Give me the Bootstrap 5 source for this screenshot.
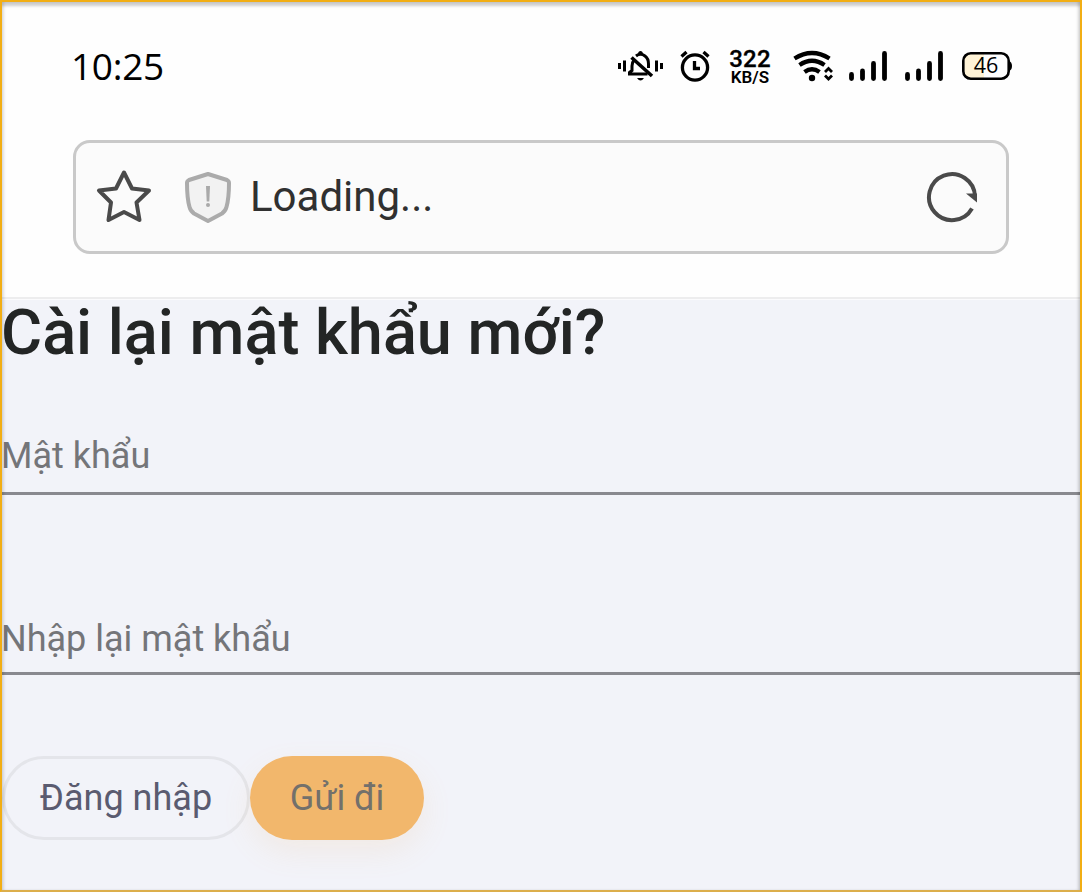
<!DOCTYPE html>
<html lang="vi">
<head>
<meta charset="utf-8">
<meta name="viewport" content="width=device-width, initial-scale=1">
<title>Cài lại mật khẩu mới?</title>
<link href="https://cdn.jsdelivr.net/npm/bootstrap@5.3.0/dist/css/bootstrap.min.css" rel="stylesheet">
<style>
body{margin:0;background:#fff;font-family:Roboto,"Noto Sans",sans-serif;overflow:hidden}
.screen{height:892px;background:#f2f3f9}
/* golden frame with a soft inner shadow, laid over the whole screen */
.frame{inset:0;border:2px solid #f2ae14;border-bottom-color:#dcae4b;box-shadow:inset 0 5px 3px -1px rgba(0,0,0,.19),inset 3px 0 3px -1px rgba(0,0,0,.12),inset -3px 0 3px -1px rgba(0,0,0,.16);pointer-events:none;z-index:5}
.browser{height:300px;background:#fefefe;border-bottom:1px solid #fbfbfd}
.browser-inner{height:299px;border-bottom:2px solid #ededee}
.status{height:140px;padding:0 69px 8px 71px;color:#000}
.clock{font:400 37px/1 "Open Sans","Noto Sans",sans-serif;letter-spacing:-.3px;padding-bottom:2px}
.rate{width:44px;font-weight:500}
.rate-num{font-size:24px;line-height:20px;letter-spacing:.2px;-webkit-text-stroke:.3px #000}
.rate-unit{font-size:17px;line-height:17px;font-weight:600}
.address{width:936px;height:114px;margin-left:73px;border:3px solid #c9c9c9;border-radius:17px;background:#fbfbfb;padding:0 28px 0 20px}
.address-text{font-size:42px;line-height:48px;color:#303030;margin-left:18px}
.title{font-size:63px;line-height:76px;font-weight:500;color:#232525;padding-left:1px;height:107px;margin:-5px 0 0;white-space:nowrap}
.field{background:transparent;border:0;border-bottom:3px solid #89898f;border-radius:0;padding:0 0 0 1px;font-size:36px;line-height:42px;color:#707276;display:block;width:100%}
.field::placeholder{color:#747579;opacity:1}
.field:focus{box-shadow:none;background:transparent}
.pill{height:84px;border-radius:42px;font-size:36px;line-height:42px;padding:0;border:0}
.pill-login{width:248px;margin-left:2px;border:3px solid #e4e5ea;color:#5a5b70}
.pill-send{width:174px;background:#f2b76c;color:#73706b;box-shadow:0 12px 30px rgba(242,170,90,.12)}
</style>
</head>
<body>
<div class="screen position-relative overflow-hidden">
  <div class="browser"><div class="browser-inner">
    <div class="status d-flex align-items-center">
      <div class="clock">10:25</div>
      <svg class="ms-auto" width="46" height="36" viewBox="617 48 46 36" fill="none" stroke="#000" stroke-width="3">
        <path d="M619.500 63v6M624.500 60.500v11M656.500 60.500v11M661.500 63v6"/>
        <path d="M634 60q-2 2.500-2 6v4.500l-2.500 2v1.500h18M636 56q4.500-3.500 9 0 3.500 2.500 3.500 8v4" stroke-width="3"/>
        <path d="M631.500 57.500l20.500 18.500" stroke-width="3.600"/>
        <path d="M638 54c0-4 5-4 5 0zM637 78h7q-3.500 5-7 0z" fill="#000" stroke="none"/>
      </svg>
      <svg width="32" height="36" viewBox="679 48 32 36" style="margin-left:16px" fill="none" stroke="#000" stroke-width="3.300">
        <circle cx="695" cy="67.500" r="12.600"/><path d="M694.500 61v7.500h5.500M681.500 56.500l5-4.500M703.500 52l5 4.500"/>
      </svg>
      <div class="rate text-center d-flex flex-column" style="margin-left:17px;padding-top:2px"><span class="rate-num">322</span><span class="rate-unit">KB/S</span></div>
      <svg width="41" height="36" viewBox="793 48 41 36" style="margin-left:21px" fill="none" stroke="#000" stroke-width="4.300">
        <path d="M794.500 58.500q17.500-11 35 0M799.500 65q12.500-8.500 25 0M804.500 72q7.500-5.500 15 0"/>
        <circle cx="812" cy="78" r="3.200" fill="#000" stroke="none"/>
        <path d="M825 72l3.500-3.500 3.500 3.500M825 75.500l3.500 3.500 3.500-3.500" stroke-width="2.800"/>
      </svg>
      <svg width="39" height="36" viewBox="849 48 39 36" style="margin-left:15px" stroke="#000" stroke-width="4.800" stroke-linecap="round"><path d="M851.500 74.500v4M862.500 71v7.500M873.500 63.500v15M884.500 53.500v25"/></svg>
      <svg width="39" height="36" viewBox="849 48 39 36" style="margin-left:17px" stroke="#000" stroke-width="4.800" stroke-linecap="round"><path d="M851.500 74.500v4M862.500 71v7.500M873.500 63.500v15M884.500 53.500v25"/></svg>
      <svg width="51" height="36" viewBox="962 48 51 36" style="margin-left:18px">
        <path d="M984 53.500h-13q-7.500 0-7.500 7.500v10q0 7.500 7.500 7.500h13z" fill="#fff3d6"/>
        <rect x="963.300" y="53.300" width="45.400" height="25.400" rx="7.500" fill="none" stroke="#000" stroke-width="2.600"/>
        <path d="M1009 61q3 1 3 5t-3 5z"/>
        <text x="986" y="73" text-anchor="middle" font-family="Open Sans, sans-serif" font-size="21.500">46</text>
      </svg>
    </div>
    <div class="address d-flex align-items-center">
      <svg width="56" height="56" viewBox="96 169 56 56" fill="none" stroke="#4a4a4a" stroke-width="4" stroke-linejoin="round"><path d="M124 172.500L132 188.500L149 190.500L136.500 202.500L139.500 220L124 212L108.500 220L111 202.500L99 190.500L116 188.500Z"/></svg>
      <svg width="48" height="54" viewBox="184 170 48 54" style="margin-left:32px">
        <path d="M208 174L227 180Q229 181 229 183Q229 198 226.500 207Q225.500 211 222 213.500L208 221L194 213.500Q190.500 211 189.500 207Q187 198 187 183Q187 181 189 180Z" fill="#f2f2f2" stroke="#ababab" stroke-width="4" stroke-linejoin="round"/>
        <path d="M206 186h4l-.7 15.500h-2.600z" fill="#a9a9a9"/><circle cx="208" cy="205" r="2" fill="#a9a9a9"/>
      </svg>
      <div class="address-text">Loading...</div>
      <svg class="ms-auto" width="52" height="54" viewBox="926 170.500 52 54" fill="none"><path d="M972 209A23 23 0 1 1 975 197" stroke="#4a4a4a" stroke-width="4"/><path d="M966 194h11v9z" fill="#4a4a4a"/></svg>
    </div>
  </div></div>
  <main>
    <h1 class="title">Cài lại mật khẩu mới?</h1>
    <input class="field" style="height:93px;padding-top:18px" type="password" placeholder="Mật khẩu" aria-label="Mật khẩu">
    <input class="field" style="height:100px;margin-top:80px;padding-top:30px" type="password" placeholder="Nhập lại mật khẩu" aria-label="Nhập lại mật khẩu">
    <div class="d-flex" style="margin-top:81px"><button class="btn pill pill-login">Đăng nhập</button><button class="btn pill pill-send">Gửi đi</button></div>
  </main>
  <div class="frame position-absolute"></div>
</div>
<script src="https://cdn.jsdelivr.net/npm/bootstrap@5.3.0/dist/js/bootstrap.bundle.min.js"></script>
</body>
</html>
